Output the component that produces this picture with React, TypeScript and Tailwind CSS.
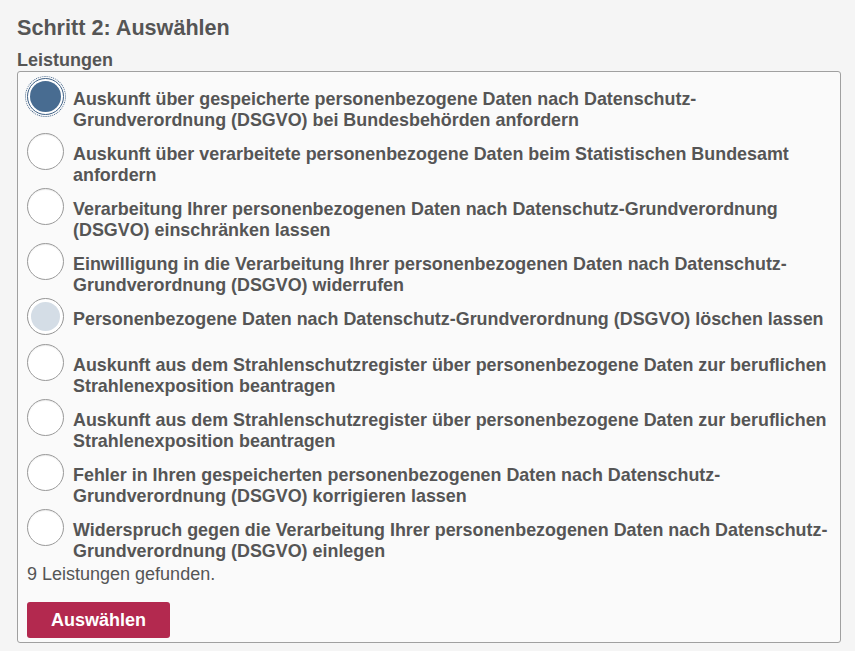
import React from "react";

type RadioState = "checked" | "hover" | "idle";

const services: { label: string; state: RadioState }[] = [
  {
    label:
      "Auskunft über gespeicherte personenbezogene Daten nach Datenschutz-Grundverordnung (DSGVO) bei Bundesbehörden anfordern",
    state: "checked",
  },
  {
    label: "Auskunft über verarbeitete personenbezogene Daten beim Statistischen Bundesamt anfordern",
    state: "idle",
  },
  {
    label: "Verarbeitung Ihrer personenbezogenen Daten nach Datenschutz-Grundverordnung (DSGVO) einschränken lassen",
    state: "idle",
  },
  {
    label: "Einwilligung in die Verarbeitung Ihrer personenbezogenen Daten nach Datenschutz-Grundverordnung (DSGVO) widerrufen",
    state: "idle",
  },
  {
    label: "Personenbezogene Daten nach Datenschutz-Grundverordnung (DSGVO) löschen lassen",
    state: "hover",
  },
  {
    label: "Auskunft aus dem Strahlenschutzregister über personenbezogene Daten zur beruflichen Strahlenexposition beantragen",
    state: "idle",
  },
  {
    label: "Auskunft aus dem Strahlenschutzregister über personenbezogene Daten zur beruflichen Strahlenexposition beantragen",
    state: "idle",
  },
  {
    label: "Fehler in Ihren gespeicherten personenbezogenen Daten nach Datenschutz-Grundverordnung (DSGVO) korrigieren lassen",
    state: "idle",
  },
  {
    label: "Widerspruch gegen die Verarbeitung Ihrer personenbezogenen Daten nach Datenschutz-Grundverordnung (DSGVO) einlegen",
    state: "idle",
  },
];

const Radio = ({ state }: { state: RadioState }) => {
  if (state === "checked") {
    return (
      <span className="flex h-[37px] w-[37px] items-center justify-center rounded-full border border-[#3d5f84] bg-white p-[2px] outline-1 outline-offset-[1px] outline-dotted outline-[#3d5f84]">
        <span className="h-full w-full rounded-full bg-[#486c91]" />
      </span>
    );
  }
  if (state === "hover") {
    return (
      <span className="flex h-[37px] w-[37px] items-center justify-center rounded-full border border-[#959595] bg-white p-[3px]">
        <span className="h-full w-full rounded-full bg-[#d4dde6]" />
      </span>
    );
  }
  return (
    <span className="block h-[37px] w-[37px] rounded-full border border-[#9a9a9a] bg-white shadow-[inset_0_1px_1px_rgba(0,0,0,0.08)]" />
  );
};

export default function App() {
  return (
    <div
      className="min-h-screen bg-[#f5f5f5] pl-[17px] pr-[14px] pt-4 text-[#555]"
      style={{ fontFamily: '"Liberation Sans", Arial, sans-serif' }}
    >
      <h1 className="text-[21.6px] font-bold leading-[24px]">Schritt 2: Auswählen</h1>
      <h2 className="mt-[10px] text-[18px] font-bold leading-[20px]">Leistungen</h2>

      <div className="mt-[1px] rounded-[3px] border border-[#a0a0a0] bg-[#fafafa] pb-[4px] pl-[9px] pr-[8px] pt-[6px]">
        <ul>
          {services.map((s, i) => (
            <li key={i} className="flex items-start gap-[9px] pb-[2px]">
              <div className="h-[44px] w-[37px] shrink-0">
                <Radio state={s.state} />
              </div>
              <span className="pt-[11px] text-[17.9px] font-bold leading-[21px]">{s.label}</span>
            </li>
          ))}
        </ul>
        <p className="text-[18px] leading-[21px]">9 Leistungen gefunden.</p>
        <button className="mt-[17px] h-[36px] w-[143px] rounded-[3px] bg-[#b3294f] text-[18px] font-bold text-white">
          Auswählen
        </button>
      </div>
    </div>
  );
}
